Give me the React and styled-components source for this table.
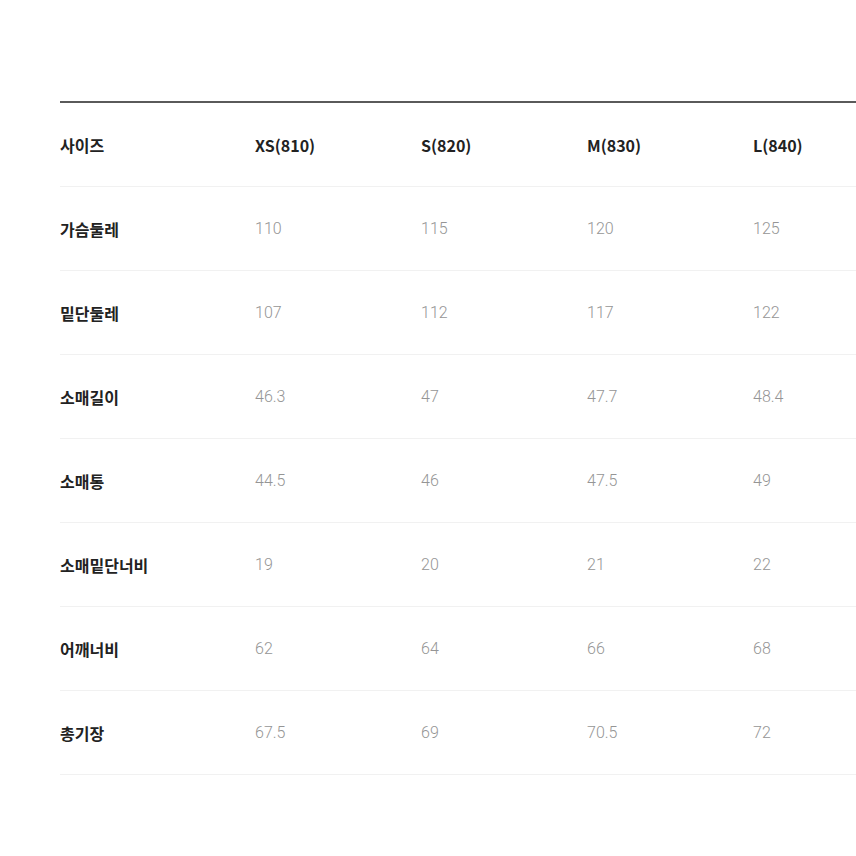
import styled, { createGlobalStyle } from "styled-components";

const GlobalStyle = createGlobalStyle`
  html, body {
    margin: 0;
    padding: 0;
    background: #fff;
    overflow: hidden;
  }
  body {
    font-family: "Noto Sans CJK KR", "Noto Sans", sans-serif;
  }
`;

const headers = ["사이즈", "XS(810)", "S(820)", "M(830)", "L(840)"];

const rows = [
  ["가슴둘레", "110", "115", "120", "125"],
  ["밑단둘레", "107", "112", "117", "122"],
  ["소매길이", "46.3", "47", "47.7", "48.4"],
  ["소매통", "44.5", "46", "47.5", "49"],
  ["소매밑단너비", "19", "20", "21", "22"],
  ["어깨너비", "62", "64", "66", "68"],
  ["총기장", "67.5", "69", "70.5", "72"],
];

const App = () => {
  return (
    <Page>
      <GlobalStyle />
      <Table>
        <Row>
          {headers.map((h) => (
            <Cell key={h} $strong>
              {h}
            </Cell>
          ))}
        </Row>
        {rows.map((r) => (
          <Row key={r[0]}>
            {r.map((v, i) => (
              <Cell key={i} $strong={i === 0}>
                {v}
              </Cell>
            ))}
          </Row>
        ))}
      </Table>
    </Page>
  );
};

export default App;

const Page = styled.div`
  width: 856px;
  height: 856px;
  padding: 101px 0 0 60px;
  box-sizing: border-box;
  overflow: hidden;
`;

const Table = styled.div`
  width: 860px;
  border-top: 2px solid #5a5a5a;
`;

const Row = styled.div`
  display: grid;
  grid-template-columns: 195px repeat(4, 166px);
  height: 84px;
  align-items: center;
  border-bottom: 1px solid #f1f1f1;
  box-sizing: border-box;
`;

const Cell = styled.div`
  font-size: 16px;
  line-height: 20px;
  padding-top: 1px;
  color: ${(p) => (p.$strong ? "#222" : "#959595")};
  font-family: ${(p) =>
    p.$strong
      ? `"Noto Sans CJK KR", "Noto Sans", sans-serif`
      : `"Roboto", "Noto Sans", sans-serif`};
  font-weight: ${(p) => (p.$strong ? 700 : 300)};
`;
